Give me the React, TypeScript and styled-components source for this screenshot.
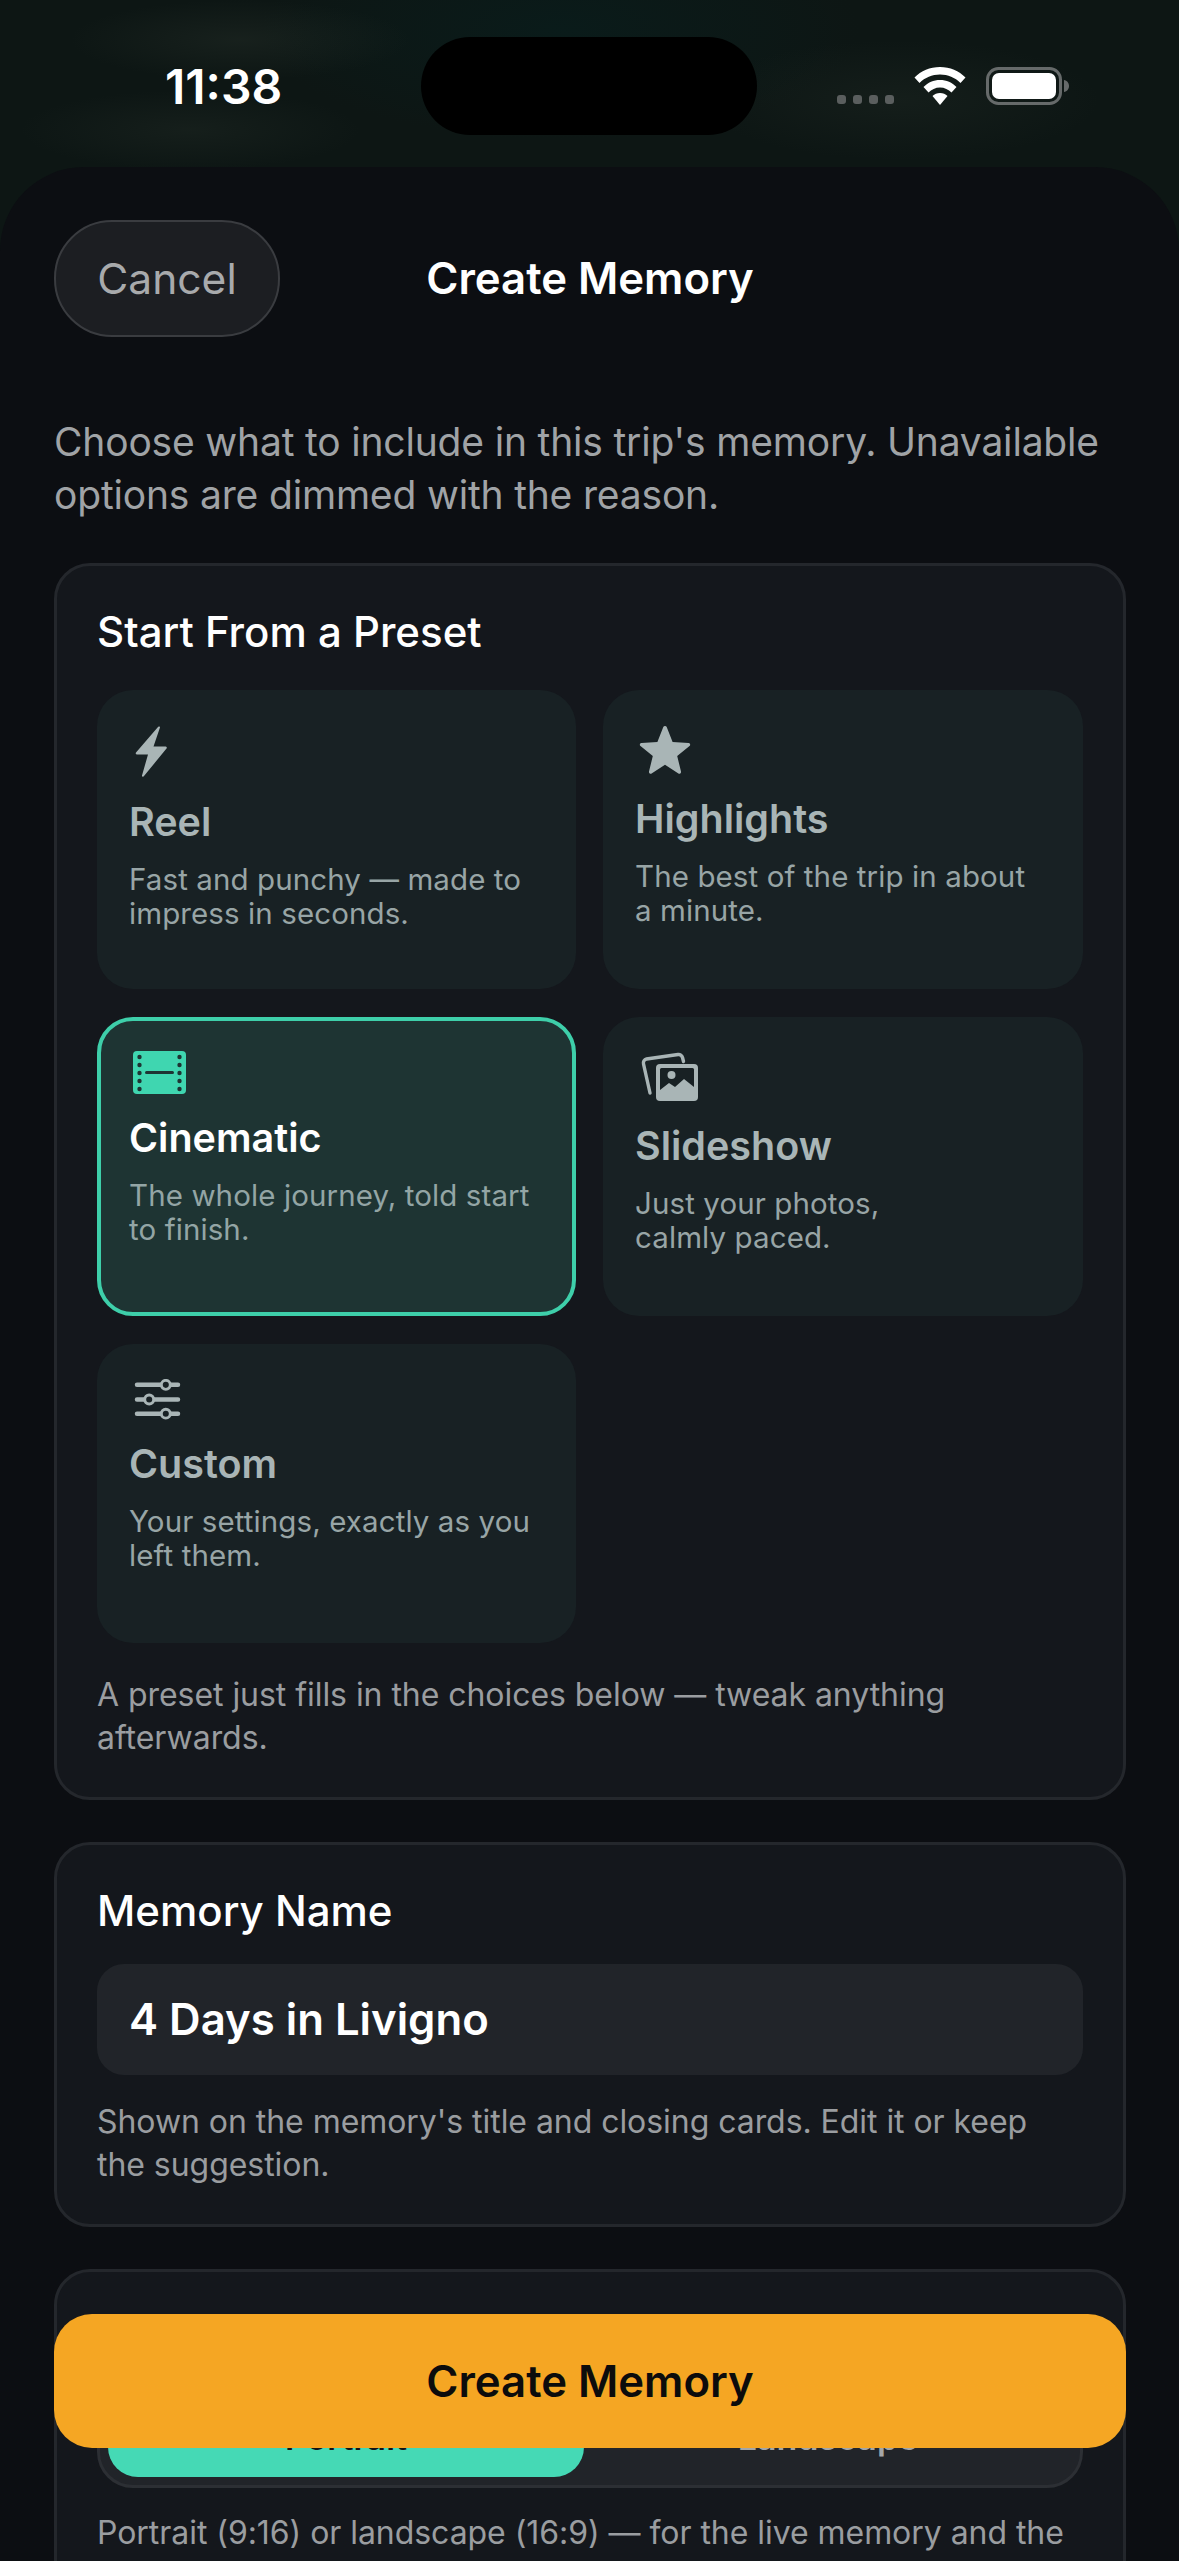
import React from "react";
import styled, { createGlobalStyle } from "styled-components";

const Global = createGlobalStyle`
  html, body { margin: 0; padding: 0; background: #0a0f0f; }
  * { box-sizing: border-box; }
`;

const Screen = styled.div`
  position: relative;
  width: 1179px;
  height: 2561px;
  overflow: hidden;
  font-family: Inter, "Liberation Sans", sans-serif;
  background:
    radial-gradient(170px 40px at 240px 40px, rgba(60, 70, 60, 0.22), transparent),
    radial-gradient(170px 40px at 190px 130px, rgba(60, 70, 60, 0.18), transparent),
    radial-gradient(200px 60px at 900px 100px, rgba(60, 70, 60, 0.16), transparent),
    radial-gradient(300px 110px at 560px 30px, rgba(5, 35, 35, 0.4), transparent),
    #0d1614;
`;

const StatusBar = styled.div`
  height: 167px;
  padding: 37px 109px 0 165px;
  display: flex;
  justify-content: space-between;
  align-items: flex-start;
`;

const Time = styled.div`
  width: 118px;
  margin-top: 21px;
  font-size: 48px;
  line-height: 58px;
  font-weight: 600;
  color: #fff;
  white-space: nowrap;
`;

const Island = styled.div`
  width: 336px;
  height: 98px;
  margin-left: 58px;
  border-radius: 49px;
  background: #000;
`;

const StatusIcons = styled.div`
  display: flex;
  align-items: flex-start;
  margin-top: 30px;
`;

const Dots = styled.div`
  display: flex;
  gap: 7px;
  margin: 28px 20px 0 0;
`;

const Dot = styled.span`
  width: 9px;
  height: 9px;
  border-radius: 3px;
  background: #5a5e5e;
`;

const Wifi = styled.svg`
  width: 52px;
  height: 38px;
  margin-right: 20px;
`;

const Battery = styled.svg`
  width: 84px;
  height: 38px;
`;

const Sheet = styled.div`
  height: 2394px;
  border-radius: 84px 84px 0 0;
  background: #0c0e12;
  padding: 53px 53px 0 54px;
`;

const Header = styled.header`
  display: grid;
  grid-template-columns: 1fr auto 1fr;
  align-items: center;
`;

const CancelButton = styled.button`
  width: 226px;
  height: 117px;
  padding: 0;
  border-radius: 58px;
  border: 2px solid #3a3c40;
  background: #1c1e22;
  color: #a8aaac;
  font: 400 42.5px Inter, "Liberation Sans", sans-serif;
`;

const SheetTitle = styled.h1`
  margin: 0;
  font-size: 43.7px;
  line-height: 58px;
  font-weight: 600;
  color: #fff;
`;

const Intro = styled.p`
  margin: 79px 0 42px;
  font-size: 39px;
  line-height: 52.5px;
  letter-spacing: -0.18px;
  white-space: nowrap;
  color: #a0a3a6;
`;

const Card = styled.section`
  padding: 41px 40px 38px;
  margin-bottom: 42px;
  border: 3px solid #24272c;
  border-radius: 36px;
  background: #14171c;
`;

const CardTitle = styled.h2<{ $gap: number }>`
  margin: 0 0 ${(p) => p.$gap}px;
  font-size: 42px;
  line-height: 50px;
  font-weight: 500;
  color: #fff;
`;

const PresetGrid = styled.div`
  display: grid;
  grid-template-columns: 479px 480px;
  grid-auto-rows: 299px;
  gap: 28px 27px;
  margin-bottom: 30px;
`;

const Preset = styled.div<{ $active?: boolean }>`
  padding: ${(p) => (p.$active ? "30px 28px" : "35px 32px")};
  border-radius: 36px;
  border: ${(p) => (p.$active ? "4px solid #3ecfaa" : "0")};
  background: ${(p) => (p.$active ? "#1e3433" : "#182124")};
`;

const PresetIcon = styled.svg<{ $w: number; $h: number; $x?: number; $active?: boolean }>`
  display: block;
  width: ${(p) => p.$w}px;
  height: ${(p) => p.$h}px;
  margin-left: ${(p) => p.$x ?? 0}px;
  color: ${(p) => (p.$active ? "#3fd6b0" : "#a9b5b6")};
`;

const PresetName = styled.div<{ $active?: boolean }>`
  margin-top: 21px;
  font-size: 39.5px;
  line-height: 46px;
  font-weight: 600;
  color: ${(p) => (p.$active ? "#fff" : "#a9b5b6")};
`;

const PresetDesc = styled.div<{ $active?: boolean }>`
  margin-top: 17px;
  font-size: 29.5px;
  line-height: 34.4px;
  letter-spacing: 0.1px;
  white-space: nowrap;
  color: ${(p) => (p.$active ? "#93a5a5" : "#98a5a6")};
`;

const Note = styled.p`
  margin: 0;
  font-size: 32px;
  line-height: 43px;
  letter-spacing: -0.05px;
  white-space: nowrap;
  color: #9a9da0;
`;

const NameInput = styled.div`
  height: 111px;
  margin-bottom: 25px;
  padding: 0 32px;
  display: flex;
  align-items: center;
  border-radius: 27px;
  background: #212429;
  font-size: 43.7px;
  font-weight: 600;
  color: #fff;
`;

const Segments = styled.div`
  display: grid;
  grid-template-columns: 476px 1fr;
  height: 97px;
  padding: 0 8px 8px;
  margin-bottom: 23px;
  border-radius: 36px;
  border: 3px solid #2c2f34;
  background: #212429;
`;

const Segment = styled.div<{ $active?: boolean }>`
  display: flex;
  align-items: center;
  justify-content: center;
  border-radius: 30px;
  font-size: 34px;
  font-weight: 600;
  padding-top: 3px;
  background: ${(p) => (p.$active ? "#45d9b5" : "transparent")};
  color: ${(p) => (p.$active ? "#101214" : "#a4a6a8")};
`;

const SubmitButton = styled.button`
  position: absolute;
  left: 54px;
  top: 2314px;
  width: 1072px;
  height: 134px;
  border: 0;
  border-radius: 38px;
  background: #f5a623;
  color: #0c0c0c;
  font: 600 43.7px Inter, "Liberation Sans", sans-serif;
`;

type Item = {
  name: string;
  desc: React.ReactNode;
  active?: boolean;
  w: number;
  h: number;
  x?: number;
  vb: string;
  art: React.ReactNode;
};

const presets: Item[] = [
  {
    name: "Reel",
    desc: <>Fast and punchy — made to<br />impress in seconds.</>,
    w: 34, h: 53, x: 5, vb: "0 0 34 52",
    art: <path d="M24 1.5 L2 27 a1.2 1.2 0 0 0 1 2 H14 L8 50 a1 1 0 0 0 1.8 .8 L32.5 23 a1.2 1.2 0 0 0 -1 -2 H19.5 L25.8 2.5 a1 1 0 0 0 -1.8 -1 Z" fill="currentColor" />,
  },
  {
    name: "Highlights",
    desc: <>The best of the trip in about<br />a minute.</>,
    w: 52, h: 50, x: 4, vb: "0 0 52 50",
    art: <path d="M26 1 a1.8 1.8 0 0 1 1.7 1.1 L33.6 17 l16 1.1 a1.6 1.6 0 0 1 .9 2.9 L38.2 31 42 46.6 a1.7 1.7 0 0 1 -2.6 1.8 L26 39.8 12.6 48.4 a1.7 1.7 0 0 1 -2.6 -1.8 L13.8 31 1.5 21 a1.6 1.6 0 0 1 .9 -2.9 l16 -1.1 L24.3 2.1 A1.8 1.8 0 0 1 26 1 Z" fill="currentColor" />,
  },
  {
    name: "Cinematic",
    desc: <>The whole journey, told start<br />to finish.</>,
    active: true,
    w: 53, h: 43, x: 4, vb: "0 0 53 43",
    art: (
      <>
        <rect width="53" height="43" rx="4" fill="currentColor" />
        {[5, 13, 21, 29, 37].map((y) => (
          <React.Fragment key={y}>
            <circle cx="6.5" cy={y + 1} r="2.2" fill="#1e3433" />
            <circle cx="46.5" cy={y + 1} r="2.2" fill="#1e3433" />
          </React.Fragment>
        ))}
        <rect x="12" y="20" width="29" height="3" rx="1.5" fill="#1e3433" />
      </>
    ),
  },
  {
    name: "Slideshow",
    desc: <>Just your photos,<br />calmly paced.</>,
    w: 59, h: 50, x: 6, vb: "0 0 59 50",
    art: (
      <>
        <path d="M9 41 L2.5 12 a4 4 0 0 1 3 -5 L37 2.5 a4 4 0 0 1 4.5 3 l1 4" fill="none" stroke="currentColor" strokeWidth="3.4" strokeLinecap="round" />
        <rect x="15" y="12" width="42" height="37" rx="4" fill="currentColor" />
        <rect x="19" y="16" width="34" height="24" rx="1.5" fill="#182124" />
        <circle cx="30.5" cy="23" r="4" fill="currentColor" />
        <path d="M19 38 L28 31 L34 35 L43 27 L53 35 V42 H19 Z" fill="currentColor" />
      </>
    ),
  },
  {
    name: "Custom",
    desc: <>Your settings, exactly as you<br />left them.</>,
    w: 47, h: 41, x: 5, vb: "0 0 47 42",
    art: (
      <>
        <g stroke="currentColor" strokeWidth="4.6" strokeLinecap="round" fill="none">
          <path d="M2.5 6 H44.5 M2.5 21 H44.5 M2.5 35.5 H44.5" />
        </g>
        <g stroke="currentColor" strokeWidth="3" fill="#182124">
          <circle cx="32" cy="6" r="4.6" />
          <circle cx="15" cy="21" r="4.6" />
          <circle cx="32" cy="35.5" r="4.6" />
        </g>
      </>
    ),
  },
];

export default function App() {
  return (
    <Screen>
      <Global />
      <StatusBar>
        <Time>11:38</Time>
        <Island />
        <StatusIcons>
          <Dots>
            <Dot /><Dot /><Dot /><Dot />
          </Dots>
          <Wifi viewBox="0 0 52 38">
            <path d="M26 0 C36 0 45 4 51.5 10.5 L46.5 16 C41 10.5 34 7.5 26 7.5 C18 7.5 11 10.5 5.5 16 L.5 10.5 C7 4 16 0 26 0 Z" fill="#fff" />
            <path d="M26 13 C32.5 13 38 15.5 42.5 20 L37.5 25.5 C34.5 22.5 30.5 20.5 26 20.5 C21.5 20.5 17.5 22.5 14.5 25.5 L9.5 20 C14 15.5 19.5 13 26 13 Z" fill="#fff" />
            <path d="M26 26 C29 26 31.5 27 33.5 29 L26 38 L18.5 29 C20.5 27 23 26 26 26 Z" fill="#fff" />
          </Wifi>
          <Battery viewBox="0 0 84 38">
            <rect x="1.5" y="1.5" width="73" height="35" rx="11" fill="none" stroke="#666a6a" strokeWidth="3" />
            <rect x="6" y="6" width="64" height="26" rx="7" fill="#fff" />
            <path d="M78 13 C81 13.5 83 16 83 19 C83 22 81 24.5 78 25 Z" fill="#666a6a" />
          </Battery>
        </StatusIcons>
      </StatusBar>
      <Sheet>
        <Header>
          <CancelButton>Cancel</CancelButton>
          <SheetTitle>Create Memory</SheetTitle>
          <span />
        </Header>
        <Intro>
          Choose what to include in this trip's memory. Unavailable<br />
          options are dimmed with the reason.
        </Intro>
        <Card>
          <CardTitle $gap={33}>Start From a Preset</CardTitle>
          <PresetGrid>
            {presets.map((p) => (
              <Preset key={p.name} $active={p.active}>
                <PresetIcon $w={p.w} $h={p.h} $x={p.x} $active={p.active} viewBox={p.vb}>
                  {p.art}
                </PresetIcon>
                <PresetName $active={p.active}>{p.name}</PresetName>
                <PresetDesc $active={p.active}>{p.desc}</PresetDesc>
              </Preset>
            ))}
          </PresetGrid>
          <Note>
            A preset just fills in the choices below — tweak anything<br />
            afterwards.
          </Note>
        </Card>
        <Card>
          <CardTitle $gap={28}>Memory Name</CardTitle>
          <NameInput>4 Days in Livigno</NameInput>
          <Note>
            Shown on the memory's title and closing cards. Edit it or keep<br />
            the suggestion.
          </Note>
        </Card>
        <Card>
          <CardTitle $gap={28}>Format</CardTitle>
          <Segments>
            <Segment $active>Portrait</Segment>
            <Segment>Landscape</Segment>
          </Segments>
          <Note>
            Portrait (9:16) or landscape (16:9) — for the live memory and the
          </Note>
        </Card>
      </Sheet>
      <SubmitButton>Create Memory</SubmitButton>
    </Screen>
  );
}
